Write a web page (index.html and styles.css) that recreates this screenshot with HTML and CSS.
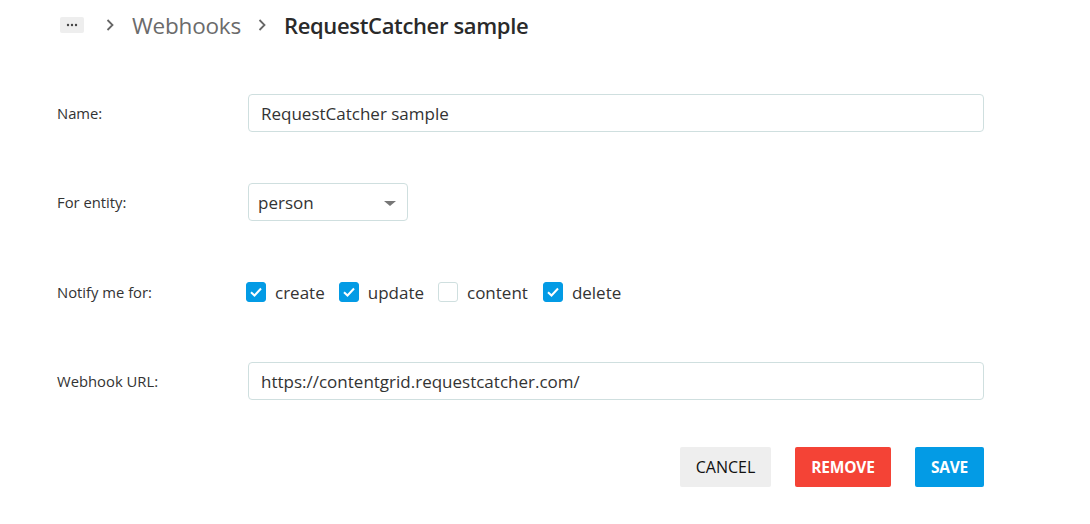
FILE: index.html
```html
<!DOCTYPE html>
<html>
<head>
<meta charset="utf-8">
<link rel="stylesheet" href="styles.css">
</head>
<body>
<div class="page">
  <nav class="crumbs">
    <span class="more"><svg width="12" height="4" viewBox="0 0 12 4"><circle cx="2" cy="2" r="1.2" fill="#444"/><circle cx="6" cy="2" r="1.2" fill="#444"/><circle cx="10" cy="2" r="1.2" fill="#444"/></svg></span>
    <svg class="chev first" width="10" height="14" viewBox="0 0 10 14"><path d="M2.5 2 L7.5 7 L2.5 12" fill="none" stroke="#666" stroke-width="1.8"/></svg>
    <span class="crumb">Webhooks</span>
    <svg class="chev second" width="10" height="14" viewBox="0 0 10 14"><path d="M2.5 2 L7.5 7 L2.5 12" fill="none" stroke="#666" stroke-width="1.8"/></svg>
    <span class="crumb current">RequestCatcher sample</span>
  </nav>

  <form class="form">
    <div class="row">
      <label class="label">Name:</label>
      <div class="field wide">RequestCatcher sample</div>
    </div>
    <div class="row">
      <label class="label">For entity:</label>
      <div class="field select">person<span class="caret"></span></div>
    </div>
    <div class="row">
      <label class="label">Notify me for:</label>
      <div class="checks">
        <span class="check"><span class="box on"><svg width="16" height="16" viewBox="0 0 16 16"><path d="M3 8.2 L6.5 11.5 L13 4.5" fill="none" stroke="#fff" stroke-width="2"/></svg></span>create</span>
        <span class="check"><span class="box on"><svg width="16" height="16" viewBox="0 0 16 16"><path d="M3 8.2 L6.5 11.5 L13 4.5" fill="none" stroke="#fff" stroke-width="2"/></svg></span>update</span>
        <span class="check"><span class="box"></span>content</span>
        <span class="check"><span class="box on"><svg width="16" height="16" viewBox="0 0 16 16"><path d="M3 8.2 L6.5 11.5 L13 4.5" fill="none" stroke="#fff" stroke-width="2"/></svg></span>delete</span>
      </div>
    </div>
    <div class="row">
      <label class="label">Webhook URL:</label>
      <div class="field wide">https://contentgrid.requestcatcher.com/</div>
    </div>
    <div class="actions">
      <button type="button" class="btn cancel">CANCEL</button>
      <button type="button" class="btn remove">REMOVE</button>
      <button type="button" class="btn save">SAVE</button>
    </div>
  </form>
</div>
</body>
</html>
```

FILE: styles.css
```css
* { box-sizing: border-box; }
html, body { margin: 0; padding: 0; background: #fff; }
body { font-family: "Open Sans", "Noto Sans", sans-serif; color: #333; }
.page { width: 1090px; height: 524px; overflow: hidden; }

.crumbs {
  display: flex;
  align-items: center;
  height: 50px;
  padding-left: 60px;
}
.more {
  display: inline-flex;
  align-items: center;
  justify-content: center;
  width: 24px;
  height: 16px;
  background: #eeeeee;
  border-radius: 2px;
}
.chev { flex: none; }
.chev.first { margin: 0 17px 0 21px; }
.chev.second { margin: 0 17px 0 16px; }
.crumb { font-size: 22.5px; color: #6b6b6b; letter-spacing: -0.2px; }
.crumb.current { font-size: 22px; color: #2a2a2a; font-weight: 600; letter-spacing: -0.35px; }

.form { padding: 44px 0 0 57px; }
.row {
  display: flex;
  align-items: center;
  height: 38px;
  margin-bottom: 51px;
}
.row:nth-child(2) { margin-bottom: 52px; }
.label { width: 191px; font-size: 14.8px; color: #333; }
.field {
  height: 38px;
  border: 1px solid #cfdfdf;
  border-radius: 4px;
  padding: 0 12px;
  display: flex;
  align-items: center;
  font-size: 17px;
  color: #333;
}
.field.wide { width: 736px; }
.field.select { width: 160px; padding-left: 9px; position: relative; }
.caret {
  position: absolute;
  right: 11px;
  top: 17px;
  width: 0; height: 0;
  border-left: 6px solid transparent;
  border-right: 6px solid transparent;
  border-top: 5px solid #777;
}
.checks { display: flex; align-items: center; margin-left: -2px; }
.check { display: flex; align-items: center; font-size: 17px; color: #333; margin-right: 14px; }
.check:nth-child(3) { margin-right: 15px; }
.box {
  width: 20px; height: 20px;
  border: 1px solid #cfdfdf;
  border-radius: 3px;
  margin-right: 9px;
  display: inline-flex;
  align-items: center;
  justify-content: center;
  background: #fff;
}
.box.on { background: #039be5; border-color: #039be5; }

.actions {
  display: flex;
  justify-content: flex-end;
  width: 927px;
  margin-top: -4px;
  gap: 24px;
}
.btn {
  height: 40px;
  border: none;
  border-radius: 2px;
  font-family: "Open Sans", "Noto Sans", sans-serif;
  font-size: 15.5px;
  padding: 0;
  font-weight: 500;
  letter-spacing: -0.2px;
}
.cancel { background: #eeeeee; color: #111; width: 91px; font-weight: 400; letter-spacing: 0; font-size: 16px; }
.remove { background: #f44336; color: #fff; font-weight: 700; width: 96px; }
.save { background: #039be5; color: #fff; font-weight: 700; width: 69px; }
```
